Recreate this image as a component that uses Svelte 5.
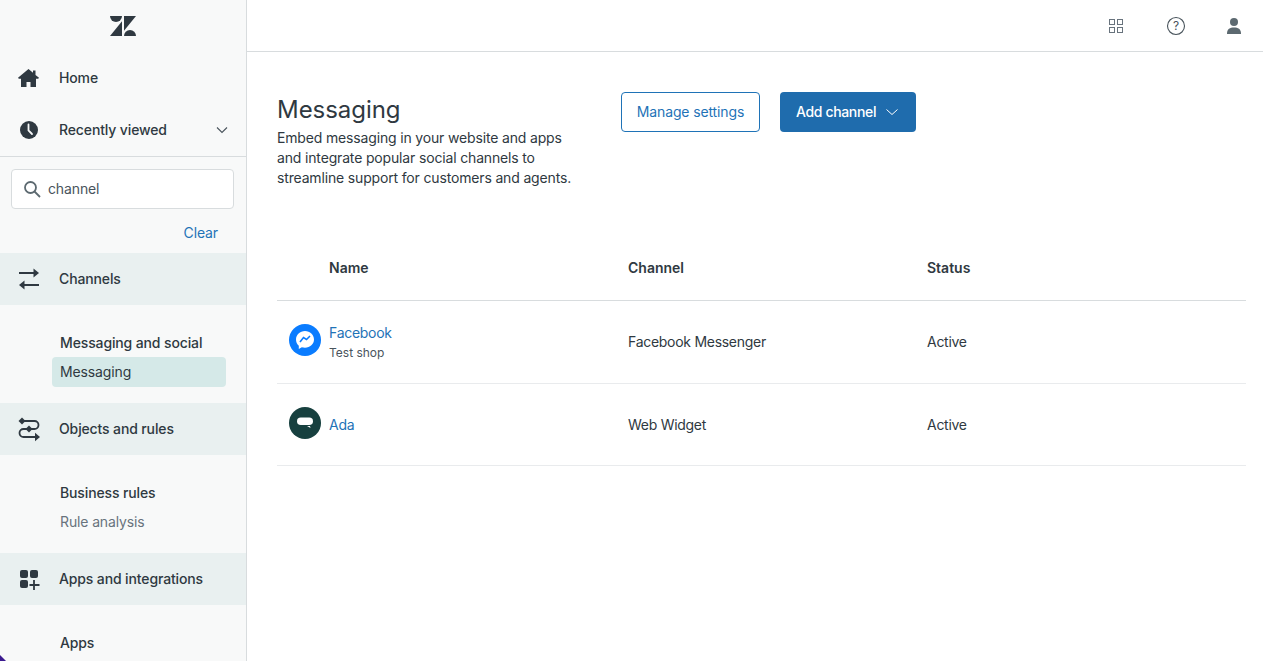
<script>
  const rows = [
    { name: "Facebook", sub: "Test shop", channel: "Facebook Messenger", status: "Active", icon: "fb" },
    { name: "Ada", sub: "", channel: "Web Widget", status: "Active", icon: "ada" }
  ];
</script>

<div class="page">
  <aside class="sidebar">
    <div class="logo">
      <svg width="26" height="20" viewBox="0 0 26 20" fill="#2f3941">
        <path d="M12 5.200V20H0z" />
        <path d="M12 0a6 6 0 0 1-12 0z" />
        <path d="M14 14.800V0h12z" />
        <path d="M14 20a6 6 0 0 1 12 0z" />
      </svg>
    </div>

    <div class="nav-item">
      <svg class="nav-icon" width="22" height="22" viewBox="0 0 22 22" fill="#2f3941">
        <path d="M10.500 2 0 10.800l.8 1H3V20H8.500V15H12.500V20H18V11.800H20.200l.8-1L17.500 7.900V3.500H15V5.800z" />
      </svg>
      <span>Home</span>
    </div>
    <div class="nav-item">
      <svg class="nav-icon" width="22" height="22" viewBox="0 0 22 22">
        <circle cx="11" cy="11" r="9" fill="#2f3941" />
        <path d="M10.500 5.500V11.500L14 15" fill="none" stroke="#f8f9f9" stroke-width="1.800" stroke-linecap="round" />
      </svg>
      <span>Recently viewed</span>
      <svg class="chevron" width="12" height="12" viewBox="0 0 12 12" fill="none" stroke="#49545c" stroke-width="1.100">
        <path d="M1 3.500l5 5 5-5" />
      </svg>
    </div>

    <div class="search-section">
      <div class="search">
        <svg width="18" height="18" viewBox="0 0 18 18" fill="none" stroke="#5c6970" stroke-width="1.800">
          <circle cx="7.500" cy="7.500" r="5.500" />
          <path d="M11.500 11.500l5.500 5.500" />
        </svg>
        <span>channel</span>
      </div>
      <div class="clear-row"><span class="clear">Clear</span></div>
    </div>

    <div class="band">
      <svg class="nav-icon" width="22" height="22" viewBox="0 0 22 22" fill="none" stroke="#2f3941" stroke-width="2">
        <path d="M1 5H17" />
        <path d="M21 5 15.500 .5V9.500z" fill="#2f3941" stroke="none" />
        <path d="M21 17H5" />
        <path d="M1 17 6.500 12.500V21.500z" fill="#2f3941" stroke="none" />
      </svg>
      <span>Channels</span>
    </div>
    <div class="group">
      <div class="sub-title">Messaging and social</div>
      <div class="sub-link active">Messaging</div>
    </div>

    <div class="band">
      <svg class="nav-icon" width="22" height="24" viewBox="0 0 22 24" fill="none" stroke="#2f3941" stroke-width="1.800">
        <path d="M4 4H16.500a4 4 0 0 1 0 8H5.500a4 4 0 0 0 0 8H18" />
        <path d="M4 .5 7.500 4 4 7.500 .5 4z" fill="#2f3941" stroke="none" />
        <path d="M11 8.500 14.500 12 11 15.500 7.500 12z" fill="#2f3941" stroke="none" />
        <path d="M22 20 17 15.800V24.200z" fill="#2f3941" stroke="none" />
      </svg>
      <span>Objects and rules</span>
    </div>
    <div class="group">
      <div class="sub-title">Business rules</div>
      <div class="sub-link muted">Rule analysis</div>
    </div>

    <div class="band">
      <svg class="nav-icon" width="22" height="22" viewBox="0 0 22 22" fill="#2f3941">
        <rect x="2" y="2" width="8" height="8" rx="2" />
        <rect x="12" y="2" width="8" height="8" rx="2" />
        <rect x="2" y="12" width="8" height="8" rx="2" />
        <path d="M16 12v10M11.500 17h10" fill="none" stroke="#2f3941" stroke-width="1.800" />
      </svg>
      <span>Apps and integrations</span>
    </div>
    <div class="group">
      <div class="sub-title">Apps</div>
    </div>
  </aside>

  <main class="content">
    <header class="topbar">
      <svg class="grid-icon" width="16" height="16" viewBox="0 0 16 16" fill="none" stroke="#68737d">
        <rect x="1.500" y="1.500" width="5" height="5" />
        <rect x="9.500" y="1.500" width="5" height="5" />
        <rect x="1.500" y="9.500" width="5" height="5" />
        <rect x="9.500" y="9.500" width="5" height="5" />
      </svg>
      <svg width="20" height="20" viewBox="0 0 20 20">
        <circle cx="10" cy="10" r="8.500" fill="none" stroke="#49545c" stroke-width="1.100" />
        <text x="10" y="14" text-anchor="middle" class="help">?</text>
      </svg>
      <svg width="16" height="18" viewBox="0 0 16 18" fill="#5c6970">
        <circle cx="8" cy="5" r="4" />
        <path d="M1 16.500C1 12 4 10.500 8 10.500S15 12 15 16.500V17H1z" />
      </svg>
    </header>

    <section class="body">
      <div class="head">
        <div class="intro">
          <h1>Messaging</h1>
          <p>Embed messaging in your website and apps and integrate popular social channels to streamline support for customers and agents.</p>
        </div>
        <button class="btn outline">Manage settings</button>
        <button class="btn solid">
          Add channel
          <svg width="12" height="12" viewBox="0 0 12 12" fill="none" stroke="#fff" stroke-width="1">
            <path d="M.5 3.500l5.500 5 5.500-5" />
          </svg>
        </button>
      </div>

      <div class="table">
        <div class="row header">
          <div class="cell-name">Name</div>
          <div>Channel</div>
          <div>Status</div>
        </div>
        {#each rows as row}
          <div class="row">
            <div class="cell-name with-icon">
              {#if row.icon === "fb"}
                <svg class="avatar" width="32" height="32" viewBox="0 0 32 32">
                  <circle cx="16" cy="16" r="16" fill="#0a7cff" />
                  <path d="M16 7c-5 0-9 3.700-9 8.500 0 2.500 1 4.700 2.800 6.200v3.300l3-1.700c1 .3 2.100.4 3.200.4 5 0 9-3.600 9-8.200S21 7 16 7z" fill="#fff" />
                  <path d="M11 18l3.500-4.500 3 2 3.500-3.500" fill="none" stroke="#0a7cff" stroke-width="1.600" />
                </svg>
              {:else}
                <svg class="avatar" width="32" height="32" viewBox="0 0 32 32">
                  <circle cx="16" cy="16" r="16" fill="#17403f" />
                  <rect x="8" y="10.500" width="16" height="7.500" rx="3.750" fill="#fff" />
                  <path d="M18 19h3l.5 2z" fill="#fff" />
                </svg>
              {/if}
              <div class:two-line={row.sub}>
                <div class="link">{row.name}</div>
                {#if row.sub}<div class="sub">{row.sub}</div>{/if}
              </div>
            </div>
            <div>{row.channel}</div>
            <div>{row.status}</div>
          </div>
        {/each}
      </div>
    </section>
  </main>

  <div class="corner"></div>
</div>

<style>
  :global(body) {
    margin: 0;
    background: #fff;
  }

  .page {
    position: relative;
    display: flex;
    height: 661px;
    overflow: hidden;
    font-family: Inter, "Noto Sans", sans-serif;
    font-size: 14px;
    line-height: 20px;
    letter-spacing: -0.13px;
    color: #2f3941;
  }

  .corner {
    position: absolute;
    left: 0;
    bottom: 0;
    width: 6px;
    height: 6px;
    background: #3b1a8f;
    clip-path: polygon(0 0, 100% 100%, 0 100%);
  }

  .sidebar {
    width: 246px;
    flex-shrink: 0;
    border-right: 1px solid #d8dcde;
    background: #f8f9f9;
    overflow: hidden;
  }

  .logo {
    height: 52px;
    display: flex;
    align-items: center;
    justify-content: center;
  }

  .nav-item,
  .band {
    height: 52px;
    display: flex;
    align-items: center;
    padding-left: 18px;
    font-weight: 500;
  }

  .nav-icon {
    flex-shrink: 0;
    margin-right: 19px;
    overflow: visible;
  }

  .chevron {
    margin-left: auto;
    margin-right: 18px;
  }

  .search-section {
    border-top: 1px solid #d8dcde;
    padding: 12px 12px 0 11px;
  }

  .search {
    height: 38px;
    display: flex;
    align-items: center;
    gap: 7px;
    padding-left: 11px;
    background: #fff;
    border: 1px solid #d8dcde;
    border-radius: 4px;
    color: #49545c;
  }

  .clear-row {
    display: flex;
    justify-content: flex-end;
    height: 44px;
    padding-top: 14px;
    box-sizing: border-box;
    padding-right: 16px;
  }

  .clear {
    color: #1f73b7;
  }

  .band {
    background: #e9f0f0;
  }

  .group {
    padding: 28px 20px 16px 52px;
  }

  .sub-title {
    font-weight: 500;
    padding: 0 8px;
    height: 20px;
    margin-bottom: 4px;
  }

  .sub-link {
    height: 30px;
    line-height: 30px;
    padding: 0 8px;
    border-radius: 4px;
  }

  .sub-link.active {
    background: #d5e9e8;
  }

  .sub-link.muted {
    color: #68737d;
  }

  .content {
    flex: 1;
    min-width: 0;
  }

  .topbar {
    height: 51px;
    display: flex;
    align-items: center;
    justify-content: flex-end;
    gap: 40px;
    padding-right: 21px;
    border-bottom: 1px solid #d8dcde;
  }

  .grid-icon {
    margin-right: 2px;
  }

  .help {
    font-family: Inter, sans-serif;
    font-size: 12px;
    fill: #49545c;
  }

  .body {
    padding: 40px 17px 0 30px;
  }

  .head {
    display: flex;
    align-items: flex-start;
    height: 144px;
  }

  .intro {
    width: 304px;
    margin-right: 40px;
  }

  h1 {
    margin: 0;
    font-size: 24px;
    line-height: 36px;
    font-weight: 400;
    letter-spacing: -0.05px;
  }

  p {
    margin: 0;
    letter-spacing: -0.16px;
  }

  .btn {
    height: 40px;
    border-radius: 4px;
    font: inherit;
    letter-spacing: inherit;
    font-weight: 500;
    box-sizing: border-box;
  }

  .outline {
    width: 139px;
    margin-right: 20px;
    background: #fff;
    color: #1f73b7;
    border: 1px solid #1f73b7;
    font-weight: 400;
  }

  .solid {
    width: 136px;
    padding: 0 0 0 16px;
    background: #1f6cad;
    color: #fff;
    border: none;
    display: flex;
    align-items: center;
    gap: 10px;
    letter-spacing: -0.35px;
  }

  .row {
    display: grid;
    grid-template-columns: 351px 299px 1fr;
    align-items: center;
    height: 82px;
    border-bottom: 1px solid #e9ebed;
    letter-spacing: -0.28px;
  }

  .row:last-child {
    height: 81px;
  }

  .row.header {
    height: 64px;
    font-weight: 600;
    letter-spacing: 0;
    border-bottom-color: #d8dcde;
  }

  .cell-name {
    padding-left: 52px;
  }

  .with-icon {
    display: flex;
    align-items: center;
    padding-left: 12px;
    gap: 8px;
  }

  .avatar {
    flex-shrink: 0;
    margin-bottom: 4px;
  }

  .two-line {
    margin-top: 1px;
  }

  .link {
    color: #1f73b7;
  }

  .sub {
    font-size: 12px;
    line-height: 18px;
    margin-top: 1px;
    letter-spacing: 0;
    color: #49545c;
  }
</style>
